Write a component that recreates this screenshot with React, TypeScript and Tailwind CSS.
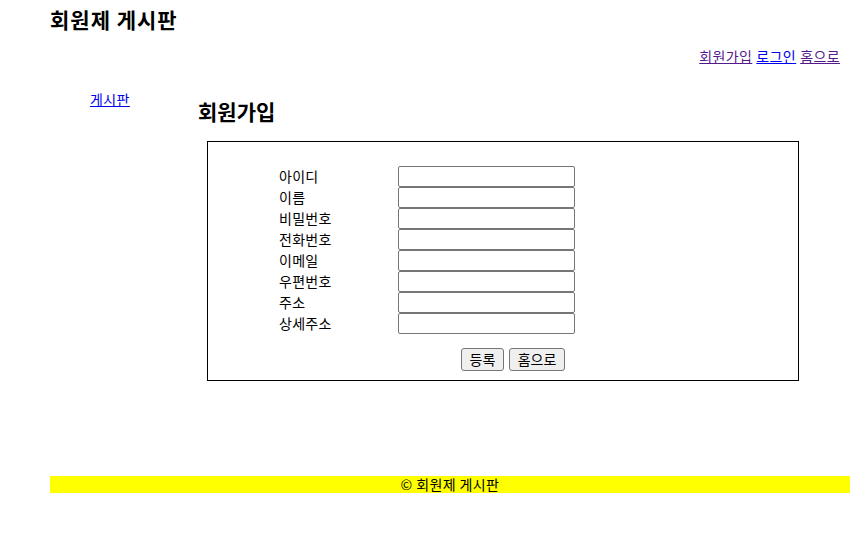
const fields = ['아이디', '이름', '비밀번호', '전화번호', '이메일', '우편번호', '주소', '상세주소'];

export default function App() {
  return (
    <div className="w-[800px] ml-[50px] text-black" style={{ fontFamily: '"Noto Sans CJK KR", "Noto Sans", sans-serif' }}>
      {/* Header */}
      <header>
        <h1 className="pt-[6px] h-[32px] text-[21px] font-bold leading-[26px] tracking-[1px]">회원제 게시판</h1>
        <nav className="flex justify-end gap-[4px] pr-[10px] pt-[15px] h-[36px] text-[14px] leading-[18px] tracking-[0.4px]">
          <a href="#" className="underline text-[#551a8b]">회원가입</a>
          <a href="#" className="underline text-[#0000ee]">로그인</a>
          <a href="#" className="underline text-[#551a8b]">홈으로</a>
        </nav>
      </header>

      <div className="flex">
        {/* Side nav */}
        <aside className="w-[148px] pl-[40px] pt-[22px] text-[14px] leading-[18px] tracking-[0.4px]">
          <a href="#" className="underline text-[#0000ee]">게시판</a>
        </aside>

        {/* Content */}
        <main className="w-[601px]">
          <h3 className="pt-[30px] h-[73px] text-[21px] font-bold leading-[26px]">회원가입</h3>
          <div className="ml-[9px] w-[592px] h-[240px] border border-black pt-[24px] pl-[71px]">
            <div className="flex flex-col">
              {fields.map((f) => (
                <div key={f} className="flex items-center h-[21px]">
                  <span className="w-[119px] text-[14px] leading-[21px] tracking-[0.3px]">{f}</span>
                  <input type="text" className="w-[177px] h-[21px] border border-[#767676] rounded-[2px] bg-white" />
                </div>
              ))}
            </div>
            <div className="flex gap-[5px] pl-[182px] pt-[14px]">
              <button className="h-[23px] w-[43px] border border-[#767676] rounded-[3px] bg-[#efefef] text-[14px] leading-[21px]">등록</button>
              <button className="h-[23px] w-[56px] border border-[#767676] rounded-[3px] bg-[#efefef] text-[14px] leading-[21px]">홈으로</button>
            </div>
          </div>
        </main>
      </div>

      {/* Footer */}
      <footer className="mt-[95px] h-[17px] bg-[#ffff00] text-center text-[14px] leading-[17px] tracking-[0.4px]">© 회원제 게시판</footer>
    </div>
  );
}
